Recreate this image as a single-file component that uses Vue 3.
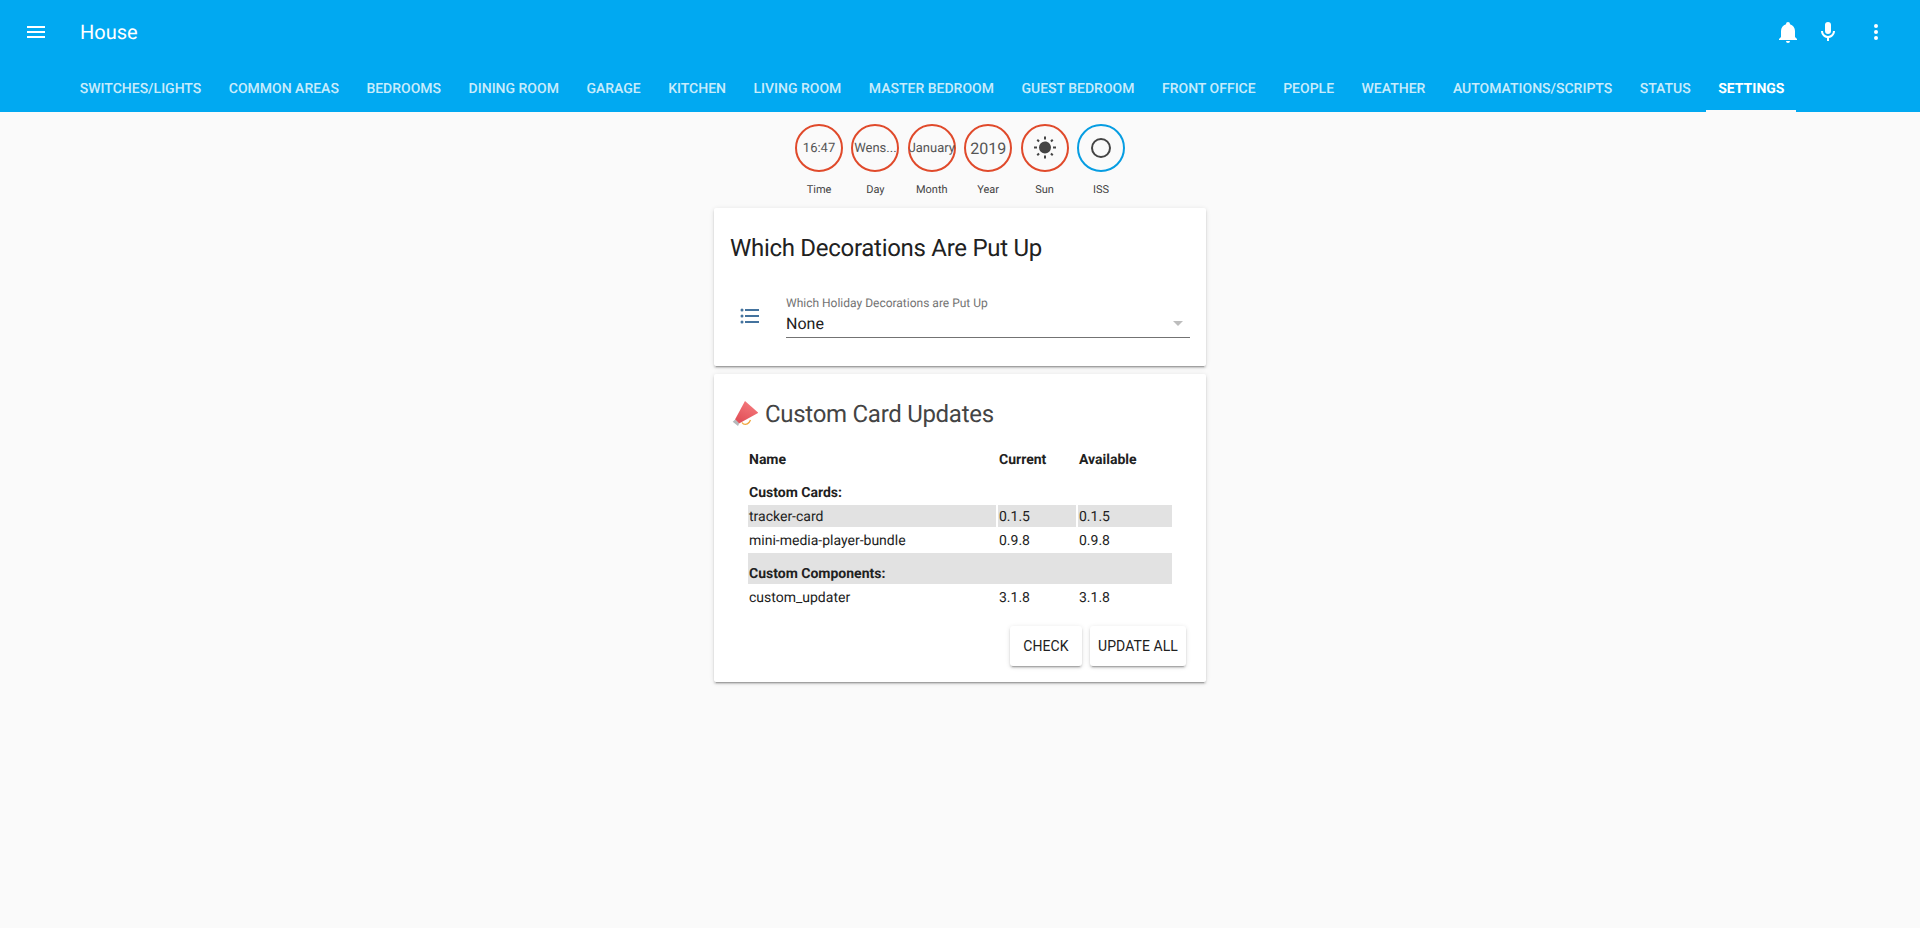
<template>
  <div class="page">
    <header class="app-header">
      <div class="toolbar">
        <button class="icon-btn menu-btn" type="button" aria-label="Menu">
          <svg viewBox="0 0 24 24"><path :d="icons.menu" /></svg>
        </button>
        <div class="app-title">House</div>
        <button class="icon-btn" type="button" aria-label="Notifications">
          <svg viewBox="0 0 24 24"><path :d="icons.bell" /></svg>
        </button>
        <button class="icon-btn" type="button" aria-label="Voice">
          <svg viewBox="0 0 24 24"><path :d="icons.mic" /></svg>
        </button>
        <button class="icon-btn more-btn" type="button" aria-label="More">
          <svg viewBox="0 0 24 24"><path :d="icons.dots" /></svg>
        </button>
      </div>
      <nav class="tabs">
        <a v-for="tab in tabs" :key="tab" class="tab" :class="{ active: tab === 'Settings' }">{{ tab }}</a>
      </nav>
    </header>

    <main class="view">
      <div class="badges">
        <div v-for="badge in badges" :key="badge.label" class="badge">
          <div class="badge-ring" :class="[badge.ring, { big: badge.big }]">
            <svg v-if="badge.icon" viewBox="0 0 24 24"><path :d="icons[badge.icon]" /></svg>
            <template v-else>{{ badge.value }}</template>
          </div>
          <div class="badge-label">{{ badge.label }}</div>
        </div>
      </div>

      <section class="card">
        <h2 class="card-title dark">Which Decorations Are Put Up</h2>
        <div class="select-row">
          <div class="select-icon">
            <svg viewBox="0 0 24 24"><path :d="icons.list" /></svg>
          </div>
          <div class="select-field">
            <label>Which Holiday Decorations are Put Up</label>
            <div class="select-value">
              <span>None</span>
              <i class="caret" />
            </div>
          </div>
        </div>
      </section>

      <section class="card">
        <h2 class="card-title">
          <svg class="megaphone" viewBox="0 0 28 28">
            <defs>
              <linearGradient id="cone" x1="0.7" y1="0.1" x2="0.3" y2="0.9">
                <stop offset="0" stop-color="#f4777b" />
                <stop offset="1" stop-color="#e2525a" />
              </linearGradient>
            </defs>
            <path d="M12 22.5C13.5 25 17 25 19 22.5L20.5 20" fill="none" stroke="#f0a63c" stroke-width="1.4" />
            <path d="M15 1 28.3 12.8 9 23.5 5 19.5Z" fill="url(#cone)" />
            <path d="M2.7 21.7 5.2 19.4 9.2 23.6 8 26Z" fill="#b5b8ba" />
          </svg>
          Custom Card Updates
        </h2>
        <div class="updates">
          <table>
            <colgroup>
              <col class="col-name" />
              <col class="col-ver" />
              <col />
            </colgroup>
            <tbody>
              <tr>
                <th>Name</th>
                <th>Current</th>
                <th>Available</th>
              </tr>
              <template v-for="group in groups" :key="group.title">
                <tr class="group" :class="{ shaded: group.shaded }">
                  <td colspan="3">{{ group.title }}</td>
                </tr>
                <tr v-for="row in group.rows" :key="row.name" :class="{ shaded: row.shaded }">
                  <td>{{ row.name }}</td>
                  <td>{{ row.current }}</td>
                  <td>{{ row.available }}</td>
                </tr>
              </template>
            </tbody>
          </table>
        </div>
        <div class="actions">
          <button class="raised" type="button">Check</button>
          <button class="raised" type="button">Update All</button>
        </div>
      </section>
    </main>
  </div>
</template>

<script setup>
const icons = {
  menu: "M3,6H21V8H3V6M3,11H21V13H3V11M3,16H21V18H3V16Z",
  bell: "M21,19V20H3V19L5,17V11C5,7.9 7.03,5.17 10,4.29C10,4.19 10,4.1 10,4A2,2 0 0,1 12,2A2,2 0 0,1 14,4C14,4.1 14,4.19 14,4.29C16.97,5.17 19,7.9 19,11V17L21,19M14,21A2,2 0 0,1 12,23A2,2 0 0,1 10,21",
  mic: "M12,2A3,3 0 0,1 15,5V11A3,3 0 0,1 12,14A3,3 0 0,1 9,11V5A3,3 0 0,1 12,2M19,11C19,14.53 16.39,17.44 13,17.93V21H11V17.93C7.61,17.44 5,14.53 5,11H7A5,5 0 0,0 12,16A5,5 0 0,0 17,11H19Z",
  dots: "M12,16A2,2 0 0,1 14,18A2,2 0 0,1 12,20A2,2 0 0,1 10,18A2,2 0 0,1 12,16M12,10A2,2 0 0,1 14,12A2,2 0 0,1 12,14A2,2 0 0,1 10,12A2,2 0 0,1 12,10M12,4A2,2 0 0,1 14,6A2,2 0 0,1 12,8A2,2 0 0,1 10,6A2,2 0 0,1 12,4Z",
  sun: "M3.55,18.54L4.96,19.95L6.76,18.16L5.34,16.74M11,22.45C11.32,22.45 13,22.45 13,22.45V19.5H11M12,5.5A6,6 0 0,0 6,11.5A6,6 0 0,0 12,17.5A6,6 0 0,0 18,11.5C18,8.18 15.31,5.5 12,5.5M20,12.5H23V10.5H20M17.24,18.16L19.04,19.95L20.45,18.54L18.66,16.74M20.45,4.46L19.04,3.05L17.24,4.84L18.66,6.26M13,0.55H11V3.5H13M4,10.5H1V12.5H4M6.76,4.84L4.96,3.05L3.55,4.46L5.34,6.26L6.76,4.84Z",
  circle: "M12,20A8,8 0 0,1 4,12A8,8 0 0,1 12,4A8,8 0 0,1 20,12A8,8 0 0,1 12,20M12,2A10,10 0 0,0 2,12A10,10 0 0,0 12,22A10,10 0 0,0 22,12A10,10 0 0,0 12,2Z",
  list: "M7,5H21V7H7V5M7,13V11H21V13H7M4,4.5A1.5,1.5 0 0,1 5.5,6A1.5,1.5 0 0,1 4,7.5A1.5,1.5 0 0,1 2.5,6A1.5,1.5 0 0,1 4,4.5M4,10.5A1.5,1.5 0 0,1 5.5,12A1.5,1.5 0 0,1 4,13.5A1.5,1.5 0 0,1 2.5,12A1.5,1.5 0 0,1 4,10.5M7,19V17H21V19H7M4,16.5A1.5,1.5 0 0,1 5.5,18A1.5,1.5 0 0,1 4,19.5A1.5,1.5 0 0,1 2.5,18A1.5,1.5 0 0,1 4,16.5Z",
};

const tabs = [
  "Switches/Lights",
  "Common Areas",
  "Bedrooms",
  "Dining Room",
  "Garage",
  "Kitchen",
  "Living Room",
  "Master Bedroom",
  "Guest Bedroom",
  "Front Office",
  "People",
  "Weather",
  "Automations/Scripts",
  "Status",
  "Settings",
];

const badges = [
  { label: "Time", value: "16:47", ring: "red" },
  { label: "Day", value: "Wens...", ring: "red" },
  { label: "Month", value: "January", ring: "red" },
  { label: "Year", value: "2019", ring: "red", big: true },
  { label: "Sun", icon: "sun", ring: "red" },
  { label: "ISS", icon: "circle", ring: "blue" },
];

const groups = [
  {
    title: "Custom Cards:",
    rows: [
      { name: "tracker-card", current: "0.1.5", available: "0.1.5", shaded: true },
      { name: "mini-media-player-bundle", current: "0.9.8", available: "0.9.8" },
    ],
  },
  {
    title: "Custom Components:",
    shaded: true,
    rows: [{ name: "custom_updater", current: "3.1.8", available: "3.1.8" }],
  },
];
</script>

<style>
html,
body {
  margin: 0;
  background: #fafafa;
}
</style>

<style scoped>
.page {
  min-height: 928px;
  background: #fafafa;
  font-family: Roboto, "Noto Sans", sans-serif;
  color: #212121;
  text-rendering: geometricPrecision;
}

.app-header {
  background: #01a9f1;
  color: #fff;
}

.toolbar {
  display: flex;
  align-items: center;
  height: 64px;
  padding: 0 24px 0 16px;
}

.icon-btn {
  display: grid;
  place-items: center;
  width: 40px;
  height: 40px;
  padding: 0;
  border: 0;
  background: none;
  color: inherit;
}

.icon-btn svg {
  width: 24px;
  height: 24px;
  fill: currentColor;
}

.more-btn {
  margin-left: 8px;
}

.app-title {
  flex: 1;
  margin-left: 24px;
  font-size: 20px;
  font-weight: 400;
}

.tabs {
  display: flex;
  height: 48px;
  padding-left: 66px;
}

.tab {
  display: flex;
  align-items: center;
  margin: 0 1.75px;
  padding: 1px 12px 0;
  font-size: 14px;
  font-weight: 500;
  text-transform: uppercase;
  white-space: nowrap;
  color: rgba(255, 255, 255, 0.8);
}

.tab.active {
  color: #fff;
  font-weight: 700;
  box-shadow: inset 0 -2px 0 #fafafa;
}

.view {
  width: 492px;
  margin: 0 auto;
}

.badges {
  display: flex;
  justify-content: center;
  gap: 8.4px;
  padding-top: 12px;
  margin-bottom: 11px;
}

.badge {
  width: 48px;
}

.badge-ring {
  display: flex;
  align-items: center;
  justify-content: center;
  box-sizing: border-box;
  width: 48px;
  height: 48px;
  border: 2px solid #e04a2b;
  border-radius: 50%;
  font-size: 13px;
  color: #555;
  white-space: nowrap;
}

.badge-ring.big {
  font-size: 16px;
}

.badge-ring.blue {
  border-color: #069de2;
}

.badge-ring svg {
  width: 24px;
  height: 24px;
  fill: #444;
}

.badge-label {
  margin-top: 11px;
  font-size: 11px;
  line-height: 14px;
  text-align: center;
  color: #444;
}

.card {
  margin-bottom: 8px;
  border-radius: 2px;
  background: #fff;
  box-shadow: 0 2px 2px 0 rgba(0, 0, 0, 0.14), 0 1px 5px 0 rgba(0, 0, 0, 0.12), 0 3px 1px -2px rgba(0, 0, 0, 0.2);
}

.card-title {
  display: flex;
  align-items: center;
  margin: 0;
  padding: 24px 16px 16px;
  font-size: 24px;
  font-weight: 400;
  letter-spacing: -0.012em;
  line-height: 32px;
  color: #444;
}

.card-title.dark {
  color: #212121;
}

.megaphone {
  flex: none;
  width: 28px;
  height: 28px;
  margin: 0 7px 0 0;
}

.select-row {
  display: flex;
  align-items: center;
  padding: 0 16px 16px;
}

.select-icon {
  display: grid;
  place-items: center;
  flex: none;
  width: 40px;
  margin: 1px 16px 0 0;
}

.select-icon svg {
  width: 24px;
  height: 24px;
  fill: #44739e;
}

.select-field {
  flex: 1;
  padding: 16px 0 12px;
}

.select-field label {
  display: block;
  font-size: 12px;
  line-height: 14px;
  color: #737373;
}

.select-value {
  display: flex;
  align-items: center;
  justify-content: space-between;
  height: 28px;
  box-sizing: border-box;
  border-bottom: 1px solid #737373;
  font-size: 16px;
  color: #212121;
}

.caret {
  width: 0;
  height: 0;
  margin-right: 7px;
  border-left: 5px solid transparent;
  border-right: 5px solid transparent;
  border-top: 5px solid #bdbdbd;
}

.updates {
  padding: 0 32px 0 16px;
  margin-left: 16px;
}

.updates table {
  width: 100%;
  border-spacing: 2px;
  table-layout: fixed;
  font-size: 14px;
  line-height: 20px;
}

.col-name {
  width: 248px;
}

.col-ver {
  width: 78px;
}

.updates th {
  padding: 2px 1px 0;
  font-weight: 700;
  text-align: left;
}

.updates td {
  padding: 2px 1px 0;
}

.updates .group td {
  padding-top: 11px;
  font-weight: 700;
}

.shaded td {
  background: #e2e2e2;
}

.actions {
  display: flex;
  justify-content: flex-end;
  gap: 8px;
  padding: 16px 20px 16px 0;
}

.raised {
  min-width: 72px;
  height: 40px;
  padding: 0 8px;
  border: 0;
  border-radius: 3px;
  background: #fff;
  font: 400 14px Roboto, "Noto Sans", sans-serif;
  letter-spacing: 0.08px;
  text-transform: uppercase;
  color: #212121;
  box-shadow: 0 2px 2px 0 rgba(0, 0, 0, 0.14), 0 1px 5px 0 rgba(0, 0, 0, 0.12), 0 3px 1px -2px rgba(0, 0, 0, 0.2);
}
</style>
